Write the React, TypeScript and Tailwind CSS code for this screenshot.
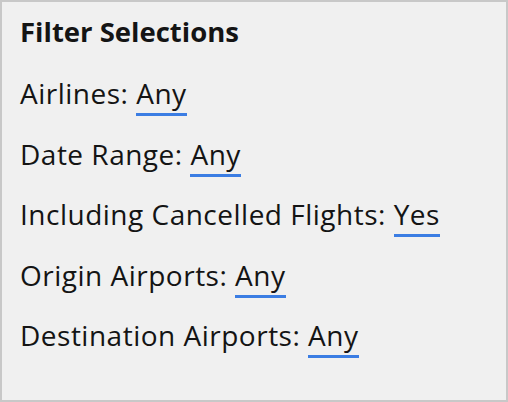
import React from 'react';

const filters = [
  { label: 'Airlines', value: 'Any' },
  { label: 'Date Range', value: 'Any' },
  { label: 'Including Cancelled Flights', value: 'Yes' },
  { label: 'Origin Airports', value: 'Any' },
  { label: 'Destination Airports', value: 'Any' },
];

export default function App() {
  return (
    <div
      className="w-[508px] h-[402px] border-2 border-[#c8c8c8] bg-[#f0f0f0] px-[18px] pt-[11px] text-[#141414]"
      style={{ fontFamily: '"Open Sans", "Noto Sans", sans-serif' }}
    >
      <h2 className="text-[27.5px] font-bold leading-[38px]">Filter Selections</h2>
      <div className="mt-[23px]">
        {filters.map((f) => (
          <div key={f.label} className="h-[60.5px] text-[28px] leading-[38px] tracking-[0.5px]">
            {f.label}:{' '}
            <span className="inline-block border-b-[3px] border-[#3b7de3] leading-[39px]">
              {f.value}
            </span>
          </div>
        ))}
      </div>
    </div>
  );
}
